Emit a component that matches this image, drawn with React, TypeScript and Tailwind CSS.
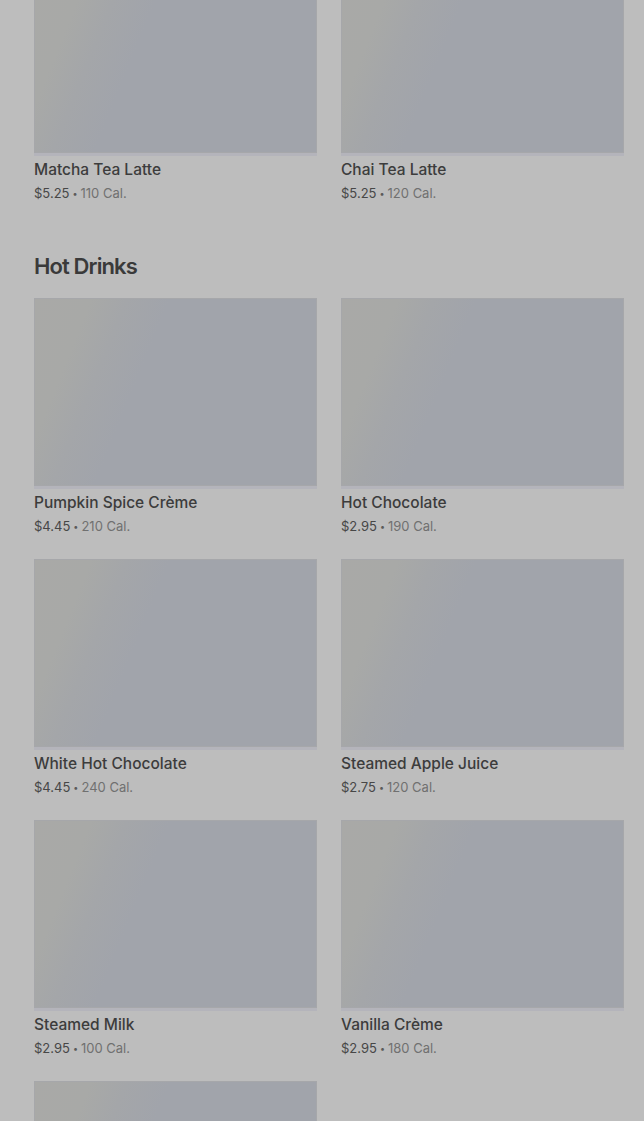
type Item = { name: string; price: string; cal: number };

const topRow: Item[] = [
  { name: "Matcha Tea Latte", price: "$5.25", cal: 110 },
  { name: "Chai Tea Latte", price: "$5.25", cal: 120 },
];

const hotDrinks: Item[] = [
  { name: "Pumpkin Spice Crème", price: "$4.45", cal: 210 },
  { name: "Hot Chocolate", price: "$2.95", cal: 190 },
  { name: "White Hot Chocolate", price: "$4.45", cal: 240 },
  { name: "Steamed Apple Juice", price: "$2.75", cal: 120 },
  { name: "Steamed Milk", price: "$2.95", cal: 100 },
  { name: "Vanilla Crème", price: "$2.95", cal: 180 },
  { name: "", price: "", cal: 0 },
];

function Card({ item }: { item: Item }) {
  return (
    <div className="min-w-0">
      {/* skeleton image */}
      <div className="border-b-[3px] border-[#b4b4bb]">
        <div className="h-[188px] w-full bg-[linear-gradient(112deg,#a9a9a7_0%,#a8a9a7_16%,#a4a6a9_26%,#a1a4ab_38%,#a1a4ab_100%)] shadow-[inset_0_0_0_1px_#a6a7aa]" />
      </div>
      {item.name && (
        <>
          <div className="mt-[2px] text-[15.5px] font-medium leading-6 text-[#3c3c3c]">{item.name}</div>
          <div className="mt-[1px] flex h-5 items-center text-[13px] leading-5 text-[#707070]">
            <span className="text-[#474747]">{item.price}</span>
            <span className="mx-[3px] text-[9px] leading-none text-[#5a5a5a]">•</span>
            <span>{item.cal} Cal.</span>
          </div>
        </>
      )}
    </div>
  );
}

export default function App() {
  return (
    <div className="h-[1121px] overflow-hidden bg-[#bdbdbd] pl-[34px] pr-[20px] font-['Inter',sans-serif]">
      <section className="-mt-[35px] grid grid-cols-2 gap-x-6">
        {topRow.map((it) => (
          <Card key={it.name} item={it} />
        ))}
      </section>

      <section className="mt-[49px]">
        <h2 className="mb-[18px] text-[22px] font-semibold leading-7 tracking-[-0.04em] text-[#3a3a3a]">
          Hot Drinks
        </h2>
        <div className="grid grid-cols-2 gap-x-6 gap-y-[23px]">
          {hotDrinks.map((it, i) => (
            <Card key={i} item={it} />
          ))}
        </div>
      </section>
    </div>
  );
}
